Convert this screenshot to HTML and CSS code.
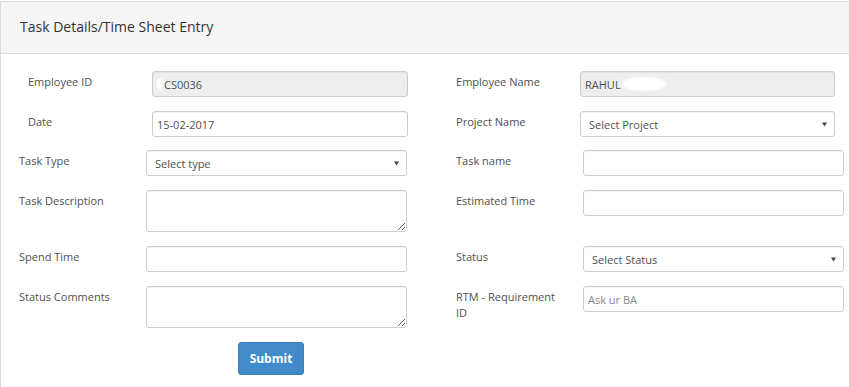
FILE: index.html
```html
<!DOCTYPE html>
<html lang="en">
<head>
    <meta charset="UTF-8">
    <meta name="viewport" content="width=device-width, initial-scale=1.0">
    <title>Task Details/Time Sheet Entry</title>
    <link rel="stylesheet" href="styles.css">
</head>
<body>
    <div class="panel">
        <div class="panel-heading">Task Details/Time Sheet Entry</div>

        <form class="panel-body">
            <div class="row">
                <div class="field field-top">
                    <label for="empId">Employee ID</label>
                    <div class="control-wrap">
                        <input type="text" id="empId" class="control id-value" value="CS0036" readonly>
                        <span class="mask mask-id"></span>
                    </div>
                </div>
                <div class="field field-top field-right">
                    <label for="empName">Employee Name</label>
                    <div class="control-wrap">
                        <input type="text" id="empName" class="control name-value" value="RAHUL" readonly>
                        <span class="mask mask-name"></span>
                    </div>
                </div>
            </div>

            <div class="row row-tight">
                <div class="field field-top">
                    <label for="date">Date</label>
                    <input type="text" id="date" class="control" value="15-02-2017">
                </div>
                <div class="field field-top field-right">
                    <label for="project">Project Name</label>
                    <select id="project" class="control select">
                        <option>Select Project</option>
                    </select>
                </div>
            </div>

            <div class="row">
                <div class="field">
                    <label for="taskType">Task Type</label>
                    <select id="taskType" class="control select">
                        <option>Select type</option>
                    </select>
                </div>
                <div class="field field-right">
                    <label for="taskName">Task name</label>
                    <input type="text" id="taskName" class="control">
                </div>
            </div>

            <div class="row">
                <div class="field">
                    <label for="taskDesc">Task Description</label>
                    <textarea id="taskDesc" class="control area"></textarea>
                </div>
                <div class="field field-right">
                    <label for="estTime">Estimated Time</label>
                    <input type="text" id="estTime" class="control">
                </div>
            </div>

            <div class="row">
                <div class="field">
                    <label for="spendTime">Spend Time</label>
                    <input type="text" id="spendTime" class="control">
                </div>
                <div class="field field-right">
                    <label for="status">Status</label>
                    <select id="status" class="control select">
                        <option>Select Status</option>
                    </select>
                </div>
            </div>

            <div class="row">
                <div class="field">
                    <label for="statusComments">Status Comments</label>
                    <textarea id="statusComments" class="control area"></textarea>
                </div>
                <div class="field field-right">
                    <label for="rtm">RTM - Requirement ID</label>
                    <input type="text" id="rtm" class="control" placeholder="Ask ur BA">
                </div>
            </div>

            <div class="actions">
                <button type="button" class="btn-submit">Submit</button>
            </div>
        </form>
    </div>
</body>
</html>
```

FILE: styles.css
```css
body {
    font-family: "Open Sans", Arial, sans-serif;
    font-size: 11px;
    color: #555;
    margin: 0;
    padding-top: 1px;
    background: white;
    overflow: hidden;
}

.panel {
    width: 870px;
    min-height: 420px;
    border: 1px solid #ddd;
    border-bottom: none;
}

.panel-heading {
    background-color: #f5f5f5;
    border-bottom: 1px solid #ddd;
    height: 51px;
    line-height: 50px;
    padding-left: 19px;
    font-size: 14px;
    color: #333;
}

.panel-body {
    padding-top: 17px;
}

.row {
    display: flex;
    margin-bottom: 14px;
}

.row-tight {
    margin-bottom: 13px;
}

.field {
    display: flex;
    width: 436px;
    padding-left: 18px;
    box-sizing: border-box;
}

.field label {
    width: 127px;
    flex-shrink: 0;
    padding-top: 3px;
    line-height: 16px;
    color: #4f4f4f;
}

.field-right {
    padding-left: 20px;
}

.field-right label {
    width: 127px;
    padding-right: 22px;
    box-sizing: border-box;
}

.field-top {
    padding-left: 27px;
}

.field-top.field-right {
    padding-left: 20px;
}

.field-top label {
    width: 124px;
}

.control-wrap {
    position: relative;
}

.control {
    width: 261px;
    height: 26px;
    box-sizing: border-box;
    border: 1px solid #ccc;
    border-radius: 3px;
    padding: 0 4px;
    font-family: "Open Sans", Arial, sans-serif;
    font-size: 11px;
    color: #4f4f4f;
    background-color: white;
    box-shadow: inset 0 1px 1px rgba(0, 0, 0, 0.05);
}

.field-top .control {
    width: 256px;
}

.field-top.field-right .control {
    width: 255px;
}

.control::placeholder {
    color: #888;
}

.control[readonly] {
    background-color: #eee;
}

.id-value {
    padding-left: 11px;
}

.mask {
    position: absolute;
    background: white;
    border-radius: 50%;
    filter: blur(1px);
}

.mask-id {
    left: 5px;
    top: 7px;
    width: 6px;
    height: 12px;
}

.mask-name {
    left: 42px;
    top: 6px;
    width: 44px;
    height: 14px;
}

.select {
    appearance: none;
    padding-left: 8px;
    background-image: url("data:image/svg+xml;utf8,<svg xmlns='http://www.w3.org/2000/svg' width='5' height='5'><path d='M0 0.5h5L2.5 4.5z' fill='%23444'/></svg>");
    background-repeat: no-repeat;
    background-position: right 7px center;
}

.area {
    height: 42px;
    resize: vertical;
}

.actions {
    padding-left: 237px;
}

.btn-submit {
    background-color: #428bca;
    border: 1px solid #3a80bd;
    border-radius: 3px;
    color: white;
    font-family: "Open Sans", Arial, sans-serif;
    font-size: 12px;
    font-weight: bold;
    width: 66px;
    height: 33px;
    cursor: pointer;
}

.btn-submit:hover {
    background-color: #3071a9;
}
```
